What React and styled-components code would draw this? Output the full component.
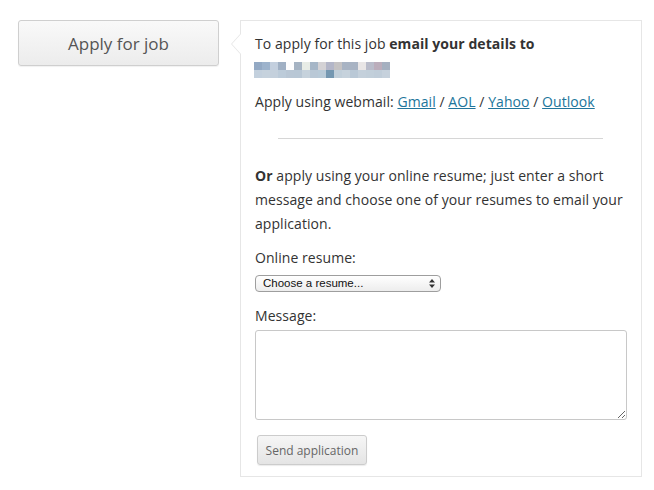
import React from 'react';
import styled, { createGlobalStyle } from 'styled-components';

const GlobalStyle = createGlobalStyle`
  body {
    margin: 0;
    background: #fff;
    font-family: "Open Sans", "Liberation Sans", sans-serif;
    color: #333;
  }
`;

const Page = styled.div`
  display: flex;
  align-items: flex-start;
  gap: 21px;
  padding: 20px 12px 0 18px;
`;

const ApplyButton = styled.button`
  width: 201px;
  height: 46px;
  flex-shrink: 0;
  border: 1px solid #cfcfcf;
  border-radius: 3px;
  background: linear-gradient(#f9f9f9, #ececec);
  box-shadow: 0 1px 1px rgba(0, 0, 0, 0.06);
  font-family: "Open Sans", sans-serif;
  font-size: 17px;
  color: #555;
  cursor: pointer;
`;

const Panel = styled.div`
  position: relative;
  width: 372px;
  padding: 11px 14px 11px 14px;
  border: 1px solid #e6e6e6;
  font-size: 14px;
  line-height: 24px;
  letter-spacing: 0.06px;

  &::before,
  &::after {
    content: '';
    position: absolute;
    top: 12px;
    border-style: solid;
    border-color: transparent;
  }
  &::before {
    left: -10px;
    border-width: 11px 10px 11px 0;
    border-right-color: #e6e6e6;
  }
  &::after {
    left: -9px;
    border-width: 11px 10px 11px 0;
    border-right-color: #fff;
  }
`;

const Para = styled.p`
  margin: ${p => p.$top || 0}px 0 0;
`;

const Link = styled.a`
  color: #21759b;
  text-decoration: underline;
`;

const Rule = styled.hr`
  margin: 24px 24px 25px 23px;
  border: 0;
  border-top: 1px solid #d6d6d6;
`;

const Label = styled.label`
  display: block;
  margin-top: ${p => p.$top}px;
`;

const SelectWrap = styled.div`
  position: relative;
  width: 186px;
  margin-top: 5px;
`;

const Select = styled.select`
  appearance: none;
  display: block;
  width: 186px;
  height: 17px;
  padding: 0 0 0 7px;
  border: 1px solid #9e9e9e;
  border-radius: 4px;
  background: linear-gradient(#ffffff, #ededed);
  font-family: "Liberation Sans", sans-serif;
  font-size: 11.5px;
  line-height: 15px;
  letter-spacing: 0;
  color: #111;
`;

const Arrows = styled.svg`
  position: absolute;
  right: 6px;
  top: 4px;
  pointer-events: none;
`;

const TextArea = styled.textarea`
  display: block;
  box-sizing: border-box;
  width: 372px;
  height: 90px;
  margin-top: 2px;
  border: 1px solid #c8c8c8;
  border-radius: 3px;
  font-family: "Open Sans", sans-serif;
`;

const SendButton = styled.button`
  display: block;
  width: 110px;
  height: 30px;
  margin: 15px 0 0 2px;
  border: 1px solid #cccccc;
  border-radius: 3px;
  background: linear-gradient(#f6f6f6, #e4e4e4);
  box-shadow: 0 1px 1px rgba(0, 0, 0, 0.08);
  font-family: "Open Sans", sans-serif;
  font-size: 12px;
  color: #666;
`;

const Blur = styled.svg`
  display: block;
  margin: 6px 0 2px -1px;
`;

const topRow = ['#93a9c4', '#9db3cc', '#c3cfde', '#a0b0c4', '#fdfdfe', '#a5b3c3', '#e8ece6', '#a6b6c7', '#d4d2d5', '#b3b6c8', '#c4c2c3', '#a8b3c3', '#a8b3c3', '#e9e6e6', '#b9bcca', '#bbadbb', '#a5b0c0'];
const bottomRow = ['#c3d0dd', '#c6d2dd', '#c4d0dc', '#bccbd9', '#b9c7d5', '#b8c7d5', '#c6d2dc', '#b9c8d6', '#b8cad8', '#7497b1', '#c1cfda', '#c6d2dc', '#b9c8d6', '#c4d0db', '#c2cfda', '#c0cdd9', '#c6d1dc'];

const Blurred = () => (
  <Blur width="136" height="16" viewBox="0 0 136 16">
    {topRow.map((c, i) => <rect key={'t' + i} x={i * 8} y="0" width="8" height="8" fill={c} />)}
    {bottomRow.map((c, i) => <rect key={'b' + i} x={i * 8} y="8" width="8" height="8" fill={c} />)}
  </Blur>
);

export default function App() {
  return (
    <>
      <GlobalStyle />
      <Page>
        <ApplyButton>Apply for job</ApplyButton>
        <Panel>
          <Para>To apply for this job <strong>email your details to</strong></Para>
          <Blurred />
          <Para $top={12}>
            Apply using webmail: <Link href="#">Gmail</Link> / <Link href="#">AOL</Link> / <Link href="#">Yahoo</Link> / <Link href="#">Outlook</Link>
          </Para>
          <Rule />
          <Para>
            <strong>Or</strong> apply using your online resume; just enter a short message and choose one of your resumes to email your application.
          </Para>
          <Label $top={10}>Online resume:</Label>
          <SelectWrap>
            <Select defaultValue="">
              <option value="">Choose a resume...</option>
            </Select>
            <Arrows width="6" height="9" viewBox="0 0 6 9">
              <path d="M3 0 L6 3.5 H0 Z M3 9 L6 5.5 H0 Z" fill="#333" />
            </Arrows>
          </SelectWrap>
          <Label $top={12}>Message:</Label>
          <TextArea />
          <SendButton>Send application</SendButton>
        </Panel>
      </Page>
    </>
  );
}
